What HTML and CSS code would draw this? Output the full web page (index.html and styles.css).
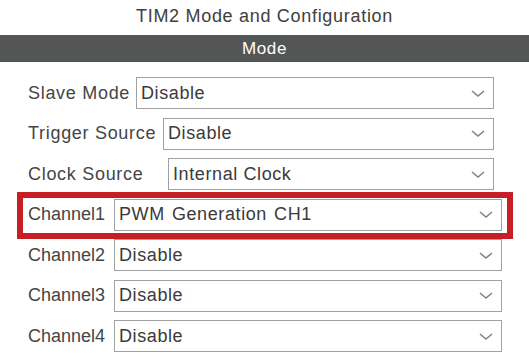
FILE: index.html
```html
<!DOCTYPE html>
<html lang="en">
  <head>
    <meta charset="UTF-8" />
    <meta name="viewport" content="width=device-width, initial-scale=1.0" />
    <title>TIM2 Mode and Configuration</title>
    <link rel="stylesheet" href="styles.css">
  </head>
  <body>
    <div class="panel">
      <h1 class="title">TIM2 Mode and Configuration</h1>
      <div class="section-bar">Mode</div>

      <div class="fields">
        <div class="field field--slave">
          <label>Slave Mode</label>
          <div class="select">
            <span>Disable</span>
            <svg class="chevron" width="14" height="7" viewBox="0 0 14 7"><path d="M1 1 L7 6 L13 1" /></svg>
          </div>
        </div>

        <div class="field field--trigger">
          <label>Trigger Source</label>
          <div class="select">
            <span>Disable</span>
            <svg class="chevron" width="14" height="7" viewBox="0 0 14 7"><path d="M1 1 L7 6 L13 1" /></svg>
          </div>
        </div>

        <div class="field field--clock">
          <label>Clock Source</label>
          <div class="select">
            <span>Internal Clock</span>
            <svg class="chevron" width="14" height="7" viewBox="0 0 14 7"><path d="M1 1 L7 6 L13 1" /></svg>
          </div>
        </div>

        <div class="field field--channel field--highlight">
          <label>Channel1</label>
          <div class="select">
            <span class="wide">PWM Generation CH1</span>
            <svg class="chevron" width="14" height="7" viewBox="0 0 14 7"><path d="M1 1 L7 6 L13 1" /></svg>
          </div>
        </div>

        <div class="field field--channel">
          <label>Channel2</label>
          <div class="select">
            <span>Disable</span>
            <svg class="chevron" width="14" height="7" viewBox="0 0 14 7"><path d="M1 1 L7 6 L13 1" /></svg>
          </div>
        </div>

        <div class="field field--channel">
          <label>Channel3</label>
          <div class="select">
            <span>Disable</span>
            <svg class="chevron" width="14" height="7" viewBox="0 0 14 7"><path d="M1 1 L7 6 L13 1" /></svg>
          </div>
        </div>

        <div class="field field--channel">
          <label>Channel4</label>
          <div class="select">
            <span>Disable</span>
            <svg class="chevron" width="14" height="7" viewBox="0 0 14 7"><path d="M1 1 L7 6 L13 1" /></svg>
          </div>
        </div>
      </div>
    </div>
  </body>
</html>
```

FILE: styles.css
```css
body {
  margin: 0;
  background-color: #fff;
  font-family: "Liberation Sans", Arial, sans-serif;
  color: #454545;
}
.panel {
  width: 529px;
  height: 360px;
  overflow: hidden;
}
.title {
  margin: 0;
  height: 35px;
  line-height: 33px;
  text-align: center;
  font-size: 18px;
  font-weight: normal;
  letter-spacing: 0.7px;
  color: #404040;
}
.section-bar {
  height: 27px;
  line-height: 27px;
  background-color: #545555;
  color: #fff;
  text-align: center;
  font-size: 17px;
  letter-spacing: 0.6px;
}
.fields {
  display: flex;
  flex-direction: column;
  gap: 8.5px;
  padding: 15px 0 0 28px;
}
.field {
  display: flex;
  align-items: center;
  height: 32px;
  margin-right: 35px;
  font-size: 18px;
}
.field label {
  flex: none;
  letter-spacing: 0.7px;
}
.field--slave label {
  width: 108px;
}
.field--trigger label {
  width: 135px;
}
.field--clock label {
  width: 140px;
}
.field--channel {
  margin-right: 27px;
}
.field--channel label {
  width: 86px;
  letter-spacing: 0;
}
.field--highlight {
  position: relative;
}
.field--highlight::after {
  content: "";
  position: absolute;
  top: -7px;
  bottom: -8px;
  left: -11px;
  right: -11px;
  border: 6px solid #c62026;
  pointer-events: none;
}
.select {
  flex: 1;
  display: flex;
  align-items: center;
  justify-content: space-between;
  box-sizing: border-box;
  height: 32px;
  padding: 0 8px 0 4px;
  border: 1px solid #a0a0a0;
  color: #3a3a3a;
  letter-spacing: 0.6px;
}
.select .wide {
  word-spacing: 1.5px;
}
.chevron {
  fill: none;
  stroke: #808080;
  stroke-width: 1.5;
}
```
